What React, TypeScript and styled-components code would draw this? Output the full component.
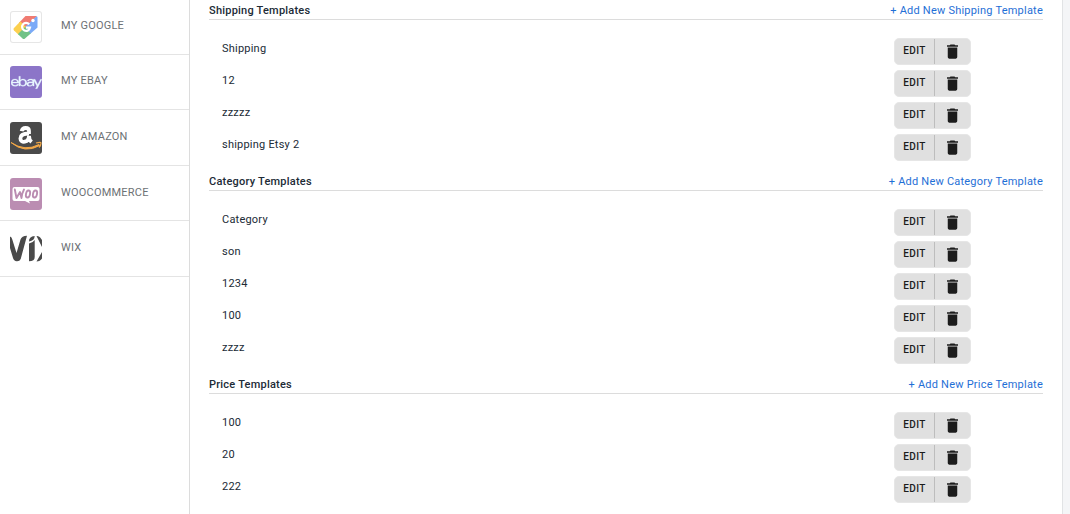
import React from "react";
import styled, { createGlobalStyle } from "styled-components";
import { SiEbay } from "react-icons/si";
import { MdDelete } from "react-icons/md";

const GlobalStyle = createGlobalStyle`
  *, *::before, *::after { box-sizing: border-box; }
  body {
    margin: 0;
    background: #f4f5f7;
    color: #212b36;
    font-family: Roboto, "Liberation Sans", sans-serif;
    font-size: 11px;
    line-height: 16px;
  }
`;

const Page = styled.div`
  display: flex;
  min-height: 100vh;
  overflow: hidden;
`;

const Sidebar = styled.nav`
  flex: 0 0 190px;
  background: #fff;
  border-right: 1px solid #dcdcdc;
`;

const ChannelList = styled.ul`
  display: grid;
  grid-auto-rows: 1fr;
  min-height: 278px;
  margin: -1px 0 0;
  padding: 0;
  list-style: none;
`;

const Channel = styled.li`
  display: flex;
  border-bottom: 1px solid #e4e4e4;
`;

const ChannelLink = styled.a`
  flex: 1;
  display: flex;
  align-items: center;
  gap: 19px;
  padding: 1px 10px 0;
  color: #6d7175;
  letter-spacing: 0.02em;
  text-decoration: none;
  text-transform: uppercase;
`;

const ChannelName = styled.span`
  padding-bottom: 2px;
`;

const Logo = styled.span<{ $fill: string; $outlined?: boolean }>`
  flex: none;
  display: flex;
  align-items: center;
  justify-content: center;
  width: 32px;
  height: 32px;
  overflow: hidden;
  border-radius: 3px;
  background: ${(p) => p.$fill};
  box-shadow: ${(p) => (p.$outlined ? "inset 0 0 0 1px #e6e6e6" : "none")};
  color: #e8f6ff;

  svg { flex: none; }
`;

const EbayMark = styled(SiEbay)`
  stroke: currentColor;
  stroke-width: 0.2;
`;

const Main = styled.main`
  flex: 1;
  min-width: 0;
  margin-right: 7px;
  padding: 0 19px 11px;
  background: #fff;
  border-right: 1px solid #e1e3e5;
`;

const SectionHeader = styled.header`
  display: flex;
  justify-content: space-between;
  padding-top: 3px;
  border-bottom: 1px solid #dcdcdc;
`;

const SectionTitle = styled.h2`
  margin: 0;
  font-size: 11px;
  font-weight: 500;
  line-height: 16px;
  letter-spacing: 0.02em;
`;

const AddLink = styled.a`
  color: #1f6fd6;
  letter-spacing: 0.02em;
  text-decoration: none;
`;

const Rows = styled.ul`
  margin: 0;
  padding: 18px 72px 5px 13px;
  list-style: none;
`;

const Row = styled.li`
  display: flex;
  justify-content: space-between;
  align-items: flex-start;
  height: 32px;
  letter-spacing: 0.02em;
`;

const RowName = styled.span`
  padding-top: 3px;
`;

const Actions = styled.div`
  display: flex;
  width: 77px;
  height: 27px;
  overflow: hidden;
  border: 1px solid #e6e6e6;
  border-radius: 5px;
  background: #e0e0e0;
`;

const ActionButton = styled.button<{ $divided?: boolean }>`
  flex: ${(p) => (p.$divided ? "0 0 40px" : "1")};
  display: flex;
  align-items: center;
  justify-content: center;
  padding: ${(p) => (p.$divided ? "0 0 2px" : "0")};
  border: 0;
  border-right: ${(p) => (p.$divided ? "1px solid #bdbdbd" : "0")};
  background: transparent;
  color: #1c1c1c;
  font: 500 10px/16px Roboto, "Liberation Sans", sans-serif;
  letter-spacing: 0.04em;
  cursor: pointer;
`;

const GoogleTag = () => (
  <svg width="26" height="26" viewBox="0 0 26 26" aria-hidden="true">
    <defs>
      <clipPath id="tag-shape">
        <path d="M12.5 2H23q1.5 0 1.5 1.5v10L12 24.5q-1.300 1-2.500 0L1 16.500q-1-1.200 0-2.400Z" />
      </clipPath>
    </defs>
    <g clipPath="url(#tag-shape)">
      <path d="M0 0h26L13 14 6 9Z" fill="#f07b72" />
      <path d="M26 0v15l-8 7-6-9Z" fill="#7baaf7" />
      <path d="M7 7 0 13v5l5 4 8-9Z" fill="#fcd04f" />
      <path d="m4 21 8-8 7 8-9 6Z" fill="#71c287" />
    </g>
    <circle cx="20" cy="6.500" r="1.700" fill="#fff" />
    <path d="M16.200 10.400a4 4 0 1 0 .8 3.200h-4" fill="none" stroke="#fff" strokeWidth="2.200" />
  </svg>
);

const AmazonLogo = () => (
  <svg width="32" height="32" viewBox="0 0 32 32" aria-hidden="true">
    <path
      d="M19 12V9q0-3-3.400-3-3.300 0-4 3.200M19 11.500c-5.500 0-8.600 1.300-8.600 4.900 0 5.300 8.600 4.400 8.600-2.700 0 3.600.6 4.600 2.600 6.300"
      fill="none"
      stroke="#fff"
      strokeWidth="3.800"
    />
    <path d="M1 20.500q14 9.500 28 2l.8 1q-15 8.500-28.800-3Z" fill="#f3a847" stroke="#f3a847" />
    <path d="M26 21q5-1.300 5 0 0 2.500-2 4.500" fill="none" stroke="#f3a847" strokeWidth="1.200" />
  </svg>
);

const WooLogo = () => (
  <svg width="32" height="32" viewBox="0 0 32 32" aria-hidden="true">
    <path d="M4.500 9h23q2 0 2 2v10q0 2-2 2H19l1 2.500-5-2.500H4.500q-2 0-2-2V11q0-2 2-2Z" fill="#fff" />
    <g fill="none" stroke="#bb8db2" strokeWidth="1.900" strokeLinecap="round" strokeLinejoin="round">
      <path d="m4.800 11.500 1.700 8.500 3.500-6 1.500 6q.5-5 2.500-8.500" />
      <ellipse cx="18" cy="16" rx="2" ry="3.600" transform="rotate(12 18 16)" />
      <ellipse cx="25" cy="16" rx="2" ry="3.600" transform="rotate(12 25 16)" />
    </g>
  </svg>
);

const WixLogo = () => (
  <svg width="32" height="32" viewBox="0 0 32 32" fill="#4a4a4a" aria-hidden="true">
    <path d="M0 3.500q1.800.5 2.300 3L6.500 20l4-13.500Q11.700 3 17 2.800L10.700 26q-1 2.500-4 2.300Q3.800 28 3 25L0 15Z" />
    <path d="M19 10.500q4.200-1 5.700-3.500v17q0 4.300-5.700 4.300Z" />
    <path d="M19 8.500q-.3-4.800 5.700-5.500 0 4.500-5.700 5.500Z" />
    <path d="M26.500 3q2.500-.2 3.700 1.500L32 7v7ZM26.500 28.500 32 19v6.500q-1.800 3-5.500 3Z" />
  </svg>
);

const channels = [
  { name: "My Google", fill: "#fff", outlined: true, mark: <GoogleTag /> },
  { name: "My eBay", fill: "#8c75c8", mark: <EbayMark size={31} /> },
  { name: "My Amazon", fill: "#4a4a4a", mark: <AmazonLogo /> },
  { name: "WooCommerce", fill: "#bb8db2", mark: <WooLogo /> },
  { name: "Wix", fill: "#fff", mark: <WixLogo /> },
];

const sections = [
  { kind: "Shipping", rows: ["Shipping", "12", "zzzzz", "shipping Etsy 2"] },
  { kind: "Category", rows: ["Category", "son", "1234", "100", "zzzz"] },
  { kind: "Price", rows: ["100", "20", "222"] },
];

const TemplateSection = ({ kind, rows }: { kind: string; rows: string[] }) => (
  <section>
    <SectionHeader>
      <SectionTitle>{kind} Templates</SectionTitle>
      <AddLink href="#">+ Add New {kind} Template</AddLink>
    </SectionHeader>
    <Rows>
      {rows.map((name) => (
        <Row key={name}>
          <RowName>{name}</RowName>
          <Actions>
            <ActionButton type="button" $divided>
              EDIT
            </ActionButton>
            <ActionButton type="button" aria-label={`Delete ${name}`}>
              <MdDelete size={19} />
            </ActionButton>
          </Actions>
        </Row>
      ))}
    </Rows>
  </section>
);

export default function App() {
  return (
    <Page>
      <GlobalStyle />
      <Sidebar>
        <ChannelList>
          {channels.map((c) => (
            <Channel key={c.name}>
              <ChannelLink href="#">
                <Logo $fill={c.fill} $outlined={c.outlined}>
                  {c.mark}
                </Logo>
                <ChannelName>{c.name}</ChannelName>
              </ChannelLink>
            </Channel>
          ))}
        </ChannelList>
      </Sidebar>
      <Main>
        {sections.map((s) => (
          <TemplateSection key={s.kind} {...s} />
        ))}
      </Main>
    </Page>
  );
}
